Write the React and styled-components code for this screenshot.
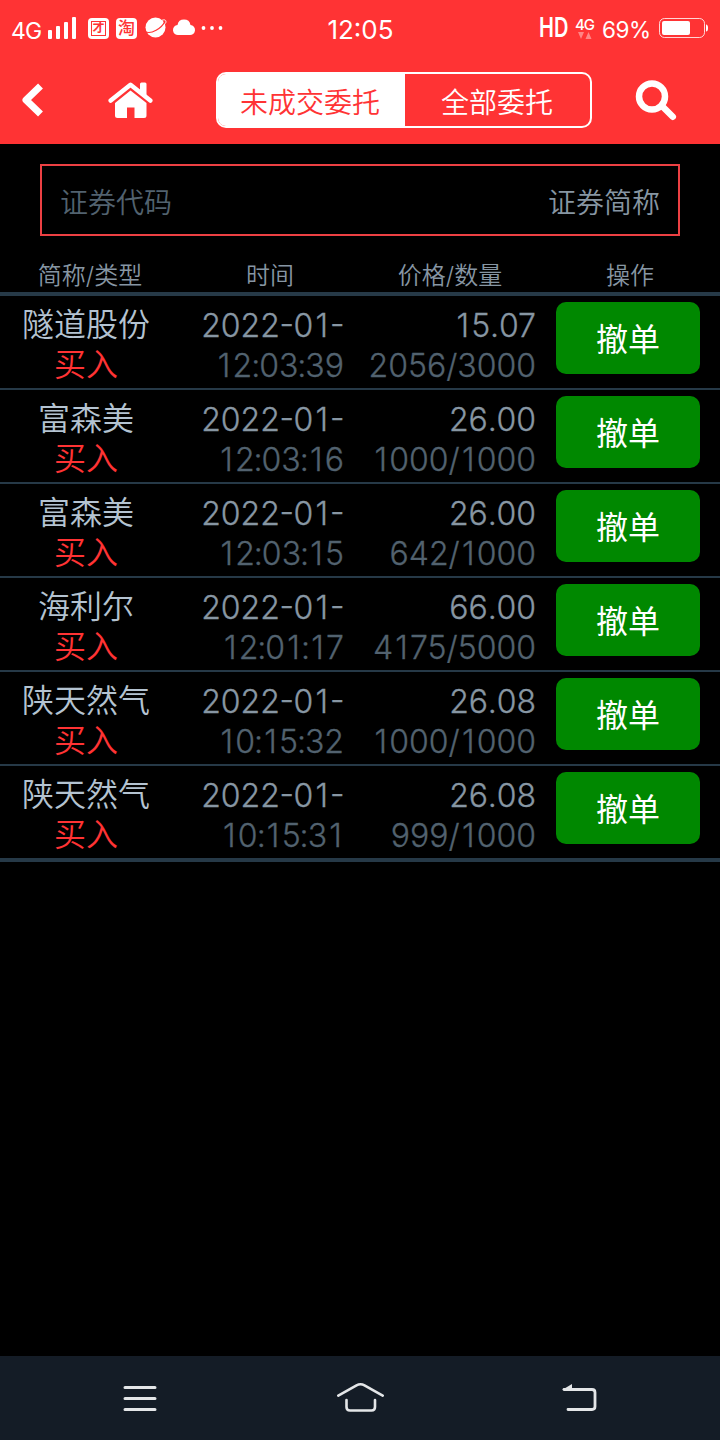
import styled, {createGlobalStyle} from 'styled-components';

const GlobalStyle = createGlobalStyle`
  * {
    box-sizing: border-box;
  }
  body {
    margin: 0;
    background-color: #000;
    font-family: Inter, 'Noto Sans CJK SC', sans-serif;
    font-weight: 350;
  }
  svg {
    display: block;
    flex-shrink: 0;
  }
`;

const Page = styled.div`
  width: 720px;
  height: 1440px;
  display: flex;
  flex-direction: column;
  background-color: #000;
  overflow: hidden;
`;

const Head = styled.header`
  height: 144px;
  background-color: #ff3334;
  color: white;
`;

const StatusBar = styled.div`
  height: 56px;
  display: grid;
  grid-template-columns: 240px 240px 240px;
  align-items: center;
`;

const StatusLeft = styled.div`
  display: flex;
  align-items: center;
  padding-left: 11px;
`;

const StatusRight = styled(StatusLeft)`
  justify-content: flex-end;
  padding: 0 12px 0 0;
`;

const StatusText = styled.span`
  width: ${props => (props.$width ? `${props.$width}px` : 'auto')};
  font-size: ${props => props.$size}px;
  line-height: 30px;
  font-weight: 400;
  letter-spacing: ${props => props.$spacing || 0}px;
  padding-top: ${props => props.$drop || 0}px;
  white-space: nowrap;
`;

const Clock = styled(StatusText)`
  text-align: center;
  padding: 4px 0 0 1px;
`;

const Hd = styled(StatusText)`
  font-weight: 600;
  transform: scaleX(0.74);
  transform-origin: left;
`;

const Badge = styled.span`
  width: 21px;
  height: 21px;
  margin-right: 7px;
  border-radius: 4px;
  background-color: white;
  color: #ff3334;
  display: flex;
  align-items: center;
  justify-content: center;
  font-size: ${props => props.$size}px;
  font-weight: ${props => props.$weight};
  line-height: 1;
`;

const BadgeFrame = styled.span`
  width: 15px;
  height: 15px;
  border: 1px solid #ff3334;
  display: flex;
  align-items: center;
  justify-content: center;
`;

const Network = styled.span`
  width: 27px;
  display: flex;
  flex-direction: column;
  align-items: flex-start;
  font-size: 15px;
  font-weight: 500;
  line-height: 15px;
  letter-spacing: -1px;
  svg {
    margin-left: 3px;
  }
`;

const NavBar = styled.div`
  height: 88px;
  display: flex;
  align-items: center;
`;

const Back = styled.div`
  width: 108px;
  padding-left: 20px;
`;

const Home = styled.div`
  width: 108px;
`;

const Tabs = styled.div`
  width: 376px;
  height: 56px;
  display: flex;
  border: 2px solid white;
  border-radius: 10px;
  background-color: #ff3334;
  overflow: hidden;
`;

const Tab = styled.div`
  width: ${props => (props.$active ? 187 : 185)}px;
  display: flex;
  align-items: center;
  justify-content: center;
  font-size: 28px;
  padding-top: 2px;
  padding-right: ${props => (props.$active ? 3 : 1)}px;
  background-color: ${props => (props.$active ? 'white' : 'transparent')};
  color: ${props => (props.$active ? '#ff3334' : 'white')};
`;

const SearchIcon = styled.div`
  padding-left: 43px;
`;

const SearchBox = styled.div`
  height: 72px;
  margin: 20px 40px 0;
  padding: 2px 18px 0;
  border: 2px solid #ec4043;
  display: flex;
  align-items: center;
  justify-content: space-between;
  font-size: 28px;
`;

const Code = styled.span`
  color: #52626f;
`;

const Name = styled.span`
  color: #8796a3;
`;

const Titles = styled.div`
  height: 60px;
  padding-top: 22px;
  display: grid;
  grid-template-columns: repeat(4, 180px);
  border-bottom: 4px solid #263947;
  color: #8796a3;
  font-size: 24px;
  line-height: 36px;
  text-align: center;
`;

const List = styled.div`
  border-bottom: 2px solid #263947;
`;

const Row = styled.div`
  height: 94px;
  display: grid;
  grid-template-columns: 172px 172px 192px 184px;
  border-bottom: 2px solid #263947;
  font-size: 32px;
  line-height: 40px;
  white-space: nowrap;
`;

const Stock = styled.div`
  padding-top: 9px;
  text-align: center;
  color: #b4c3d1;
`;

const Side = styled.div`
  color: #ff3334;
`;

const Figures = styled.div`
  padding-top: 10px;
  text-align: right;
  color: #8796a3;
  -webkit-text-stroke: 0.3px currentColor;
`;

const Sub = styled.div`
  color: #52626f;
`;

const Glyph = styled.span`
  display: inline-block;
  margin: 0 ${props => props.$gap}px;
  font-feature-settings: ${props => (props.$raised ? "'case'" : 'normal')};
`;

const CancelBtn = styled.button`
  width: 144px;
  height: 72px;
  margin: 6px 0 0 20px;
  padding: 0 0 2px;
  border: none;
  border-radius: 10px;
  background-color: #008800;
  color: white;
  font-family: inherit;
  font-size: 32px;
  font-weight: 400;
  :hover {
    cursor: pointer;
  }
`;

const SystemNav = styled.nav`
  height: 84px;
  margin-top: auto;
  display: grid;
  grid-template-columns: 280px 160px 280px;
  align-items: center;
  justify-items: center;
  background-color: #141c26;
`;

const orders = [
  {name: '隧道股份', time: '12:03:39', price: '15.07', count: '2056/3000'},
  {name: '富森美', time: '12:03:16', price: '26.00', count: '1000/1000'},
  {name: '富森美', time: '12:03:15', price: '26.00', count: '642/1000'},
  {name: '海利尔', time: '12:01:17', price: '66.00', count: '4175/5000'},
  {name: '陕天然气', time: '10:15:32', price: '26.08', count: '1000/1000'},
  {name: '陕天然气', time: '10:15:31', price: '26.08', count: '999/1000'},
];

// side gaps of the characters that are not set at their natural width
const gaps = {1: 2.2, '.': -0.2, ':': -1, '-': -0.4};

function Digits({value}) {
  return value
    .split(/([1.:-])/)
    .filter(Boolean)
    .map((part, i) =>
      part in gaps ? (
        <Glyph key={i} $gap={gaps[part]} $raised={part === '-'}>
          {part}
        </Glyph>
      ) : (
        part
      )
    );
}

function Header() {
  return (
    <Head>
      <StatusBar>
        <StatusLeft>
          <StatusText $size={23} $drop={5} $spacing={-0.8} $width={29}>
            4G
          </StatusText>
          <svg width="48" height="56" viewBox="40 0 48 56" fill="white">
            <rect x="48" y="30" width="4" height="9" rx="1" />
            <rect x="56" y="26" width="4" height="13" rx="1" />
            <rect x="64" y="22" width="4" height="17" rx="1" />
            <rect x="72" y="17" width="4" height="22" rx="1" />
          </svg>
          <Badge $size={12} $weight={700}>
            <BadgeFrame>才</BadgeFrame>
          </Badge>
          <Badge $size={17} $weight={500}>
            淘
          </Badge>
          <svg width="80" height="56" viewBox="144 0 80 56">
            <circle cx="155.500" cy="27.500" r="10" fill="white" />
            <path
              d="M145 31.500C151 35 162 28 164.800 21.500"
              stroke="#ff3334"
              strokeWidth="1.200"
              fill="none"
            />
            <path d="M161.500 20.500C164.500 19 167 20 165.500 23.500" stroke="white" fill="none" />
            <path
              d="M178.500 35a5 5 0 0 1-1-10 6.600 6.600 0 0 1 13 0 5 5 0 0 1-1 10z"
              fill="white"
            />
            <circle cx="203.500" cy="28" r="1.900" fill="white" />
            <circle cx="212" cy="28" r="1.900" fill="white" />
            <circle cx="220.500" cy="28" r="1.900" fill="white" />
          </svg>
        </StatusLeft>
        <Clock $size={26}>12:05</Clock>
        <StatusRight>
          <Hd $size={27} $width={36}>
            HD
          </Hd>
          <Network>
            4G
            <svg width="14" height="7" viewBox="0 0 14 7" fill="#ff8585">
              <path d="M0 0h6L3 7zM7.500 7h6l-3-7z" />
            </svg>
          </Network>
          <StatusText $size={22.5} $drop={3} $spacing={-0.4} $width={56}>
            69%
          </StatusText>
          <svg width="50" height="22" viewBox="658 17 50 22">
            <rect
              x="659.500"
              y="18.500"
              width="45"
              height="19"
              rx="5"
              fill="none"
              stroke="white"
              strokeOpacity="0.8"
            />
            <rect x="662" y="21" width="28" height="14" rx="2" fill="white" />
            <path d="M706 24.500q2 0 2 3.500t-2 3.500z" fill="white" />
          </svg>
        </StatusRight>
      </StatusBar>
      <NavBar>
        <Back>
          <svg width="26" height="38" viewBox="20 81 26 38">
            <path
              d="M40.500 86L26 100l14.500 14"
              fill="none"
              stroke="white"
              strokeWidth="7"
              strokeLinejoin="round"
            />
          </svg>
        </Back>
        <Home>
          <svg width="46" height="38" viewBox="108 81 46 38">
            <path
              d="M110.700 100.500L130.500 84.800l19.800 15.700"
              fill="none"
              stroke="white"
              strokeWidth="4.500"
              strokeLinecap="round"
              strokeLinejoin="round"
            />
            <path
              d="M140 84q0-1.500 1.500-1.500h3.500q1.500 0 1.500 1.500v12l-6.500-5z"
              fill="white"
            />
            <path
              d="M130.500 90.500L146.500 103v12.500q0 2.500-2.500 2.500h-9.500v-10.500h-7.500v10.500h-9.500q-2.500 0-2.500-2.500V103z"
              fill="white"
            />
          </svg>
        </Home>
        <Tabs>
          <Tab $active>未成交委托</Tab>
          <Tab>全部委托</Tab>
        </Tabs>
        <SearchIcon>
          <svg width="42" height="42" viewBox="635 79 42 42" fill="none" stroke="white">
            <circle cx="652" cy="96.500" r="13" strokeWidth="6.500" />
            <path d="M661.500 105.500l11.300 11.300" strokeWidth="6.500" strokeLinecap="round" />
          </svg>
        </SearchIcon>
      </NavBar>
    </Head>
  );
}

function App() {
  return (
    <Page>
      <GlobalStyle />
      <Header />
      <SearchBox>
        <Code>证券代码</Code>
        <Name>证券简称</Name>
      </SearchBox>
      <Titles>
        <span>简称/类型</span>
        <span>时间</span>
        <span>价格/数量</span>
        <span>操作</span>
      </Titles>
      <List>
        {orders.map(order => (
          <Row key={order.time}>
            <Stock>
              {order.name}
              <Side>买入</Side>
            </Stock>
            <Figures>
              <Digits value="2022-01-" />
              <Sub>
                <Digits value={order.time} />
              </Sub>
            </Figures>
            <Figures>
              <Digits value={order.price} />
              <Sub>
                <Digits value={order.count} />
              </Sub>
            </Figures>
            <CancelBtn>撤单</CancelBtn>
          </Row>
        ))}
      </List>
      <SystemNav>
        <svg width="34" height="28" viewBox="0 0 34 28" stroke="#e4e6e8" strokeWidth="3">
          <path d="M2 3.500h30M2 14.500h30M2 25.500h30" strokeLinecap="round" />
        </svg>
        <svg
          width="50"
          height="32"
          viewBox="335 1382 50 32"
          fill="none"
          stroke="#e4e6e8"
          strokeWidth="2.600"
          strokeLinecap="round"
        >
          <path d="M338.300 1395.700L356.500 1385.300q4-2 8 0L382.700 1395.700" />
          <path d="M346.500 1400v7q0 3.500 3.500 3.500h21.500q3.500 0 3.500-3.500v-7" />
        </svg>
        <svg width="38" height="32" viewBox="561 1382 38 32" fill="none">
          <path
            d="M564 1389.500h28q3 0 3 3v14q0 3-3 3h-24"
            stroke="#e4e6e8"
            strokeWidth="2.800"
            strokeLinecap="round"
          />
          <path d="M562 1390l10-6v6z" fill="#e4e6e8" />
        </svg>
      </SystemNav>
    </Page>
  );
}

export default App;
